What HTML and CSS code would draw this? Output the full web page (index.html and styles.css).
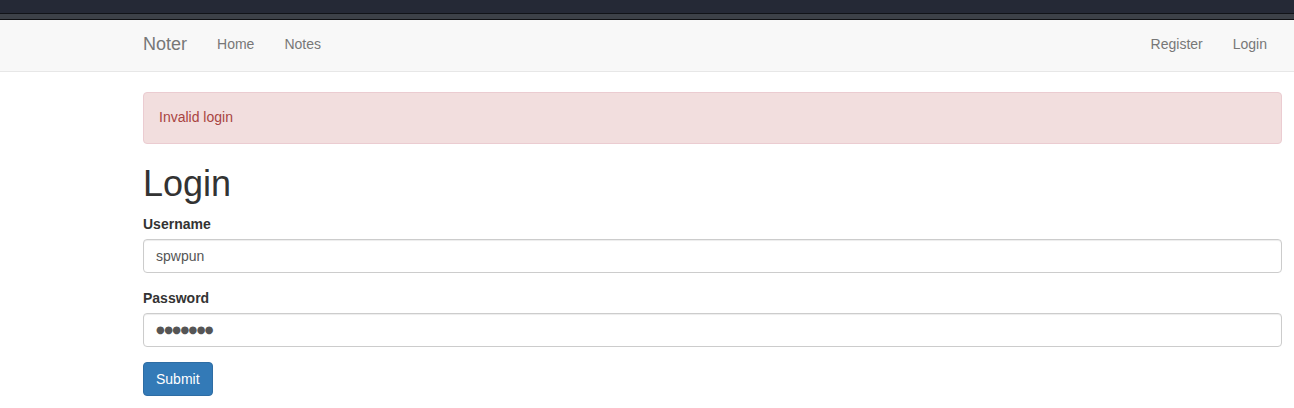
FILE: index.html
```html
<!DOCTYPE html>
<html>
<head>
<meta charset="utf-8">
<title>Noter</title>
<link rel="stylesheet" href="styles.css">
</head>
<body>
<div class="chrome">
  <div class="chrome-dark"></div>
  <div class="chrome-gray"></div>
</div>
<nav class="navbar">
  <div class="container nav-inner">
    <div class="nav-left">
      <a class="brand" href="#">Noter</a>
      <a class="nav-link" href="#">Home</a>
      <a class="nav-link" href="#">Notes</a>
    </div>
    <div class="nav-right">
      <a class="nav-link" href="#">Register</a>
      <a class="nav-link" href="#">Login</a>
    </div>
  </div>
</nav>
<main class="container">
  <div class="alert">Invalid login</div>
  <h1 class="title">Login</h1>
  <form class="form">
    <div class="form-group">
      <label class="label" for="username">Username</label>
      <input class="input" id="username" type="text" value="spwpun">
    </div>
    <div class="form-group">
      <label class="label" for="password">Password</label>
      <input class="input input-password" id="password" type="text" value="●●●●●●●" aria-label="Password (masked)">
    </div>
    <button class="btn" type="button">Submit</button>
  </form>
</main>
</body>
</html>
```
FILE: styles.css
```css
* { box-sizing: border-box; }
html, body { margin: 0; padding: 0; }
body {
  font-family: "Liberation Sans", Arial, sans-serif;
  font-size: 14px;
  line-height: 20px;
  color: #333;
  background: #fff;
}
.chrome { background: #252936; }
.chrome-dark { height: 14px; border-bottom: 1px solid #111318; }
.chrome-gray { height: 6px; background: #3d4148; border-bottom: 1px solid #0f1014; }

.container {
  margin-left: 143px;
  margin-right: 12px;
}
.navbar {
  background: #f8f8f8;
  border-bottom: 1px solid #e7e7e7;
  height: 52px;
  margin-bottom: 20px;
}
.nav-inner {
  display: flex;
  justify-content: space-between;
  height: 51px;
}
.nav-left, .nav-right { display: flex; align-items: flex-start; }
.brand {
  color: #777;
  font-size: 18px;
  line-height: 20px;
  padding: 14px 15px 16px 0;
  text-decoration: none;
}
.nav-link {
  color: #777;
  font-size: 14px;
  line-height: 20px;
  padding: 14px 15px 16px;
  text-decoration: none;
}
.alert {
  background: #f2dede;
  border: 1px solid #ebccd1;
  color: #a94442;
  border-radius: 4px;
  padding: 14px 15px 16px;
  margin-bottom: 20px;
}
.title {
  font-size: 36px;
  font-weight: 500;
  line-height: 1.1;
  margin: 19px 0 10px;
}
.form { margin: 0; }
.form-group { margin-bottom: 15px; }
.label {
  display: block;
  font-weight: bold;
  margin-bottom: 5px;
}
.input {
  display: block;
  width: 100%;
  height: 34px;
  padding: 6px 12px;
  font-family: "Liberation Sans", Arial, sans-serif;
  font-size: 14px;
  line-height: 20px;
  color: #555;
  background: #fff;
  border: 1px solid #ccc;
  border-radius: 4px;
  box-shadow: inset 0 1px 1px rgba(0,0,0,.075);
  outline: none;
}
.input-password {
  font-family: "DejaVu Sans", sans-serif;
  font-size: 10px;
  letter-spacing: -0.6px;
}
.btn {
  display: inline-block;
  height: 34px;
  padding: 6px 12px;
  font-family: "Liberation Sans", Arial, sans-serif;
  font-size: 14px;
  line-height: 20px;
  color: #fff;
  background: #337ab7;
  border: 1px solid #2e6da4;
  border-radius: 4px;
  cursor: pointer;
}
```
